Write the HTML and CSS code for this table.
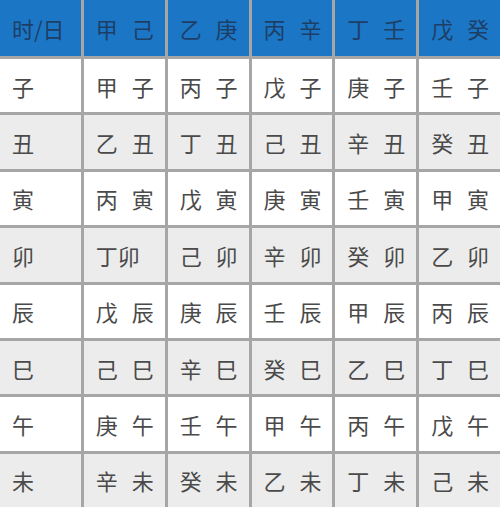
FILE: index.html
```html
<!DOCTYPE html>
<html lang="zh">
<head>
<meta charset="utf-8">
<title>时日干支表</title>
<link rel="stylesheet" href="styles.css">
</head>
<body>
<div class="table">
  <div class="cell head">时/日</div>
  <div class="cell head">甲 己</div>
  <div class="cell head">乙 庚</div>
  <div class="cell head">丙 辛</div>
  <div class="cell head">丁 壬</div>
  <div class="cell head">戊 癸</div>

  <div class="cell">子</div><div class="cell">甲 子</div><div class="cell">丙 子</div><div class="cell">戊 子</div><div class="cell">庚 子</div><div class="cell">壬 子</div>
  <div class="cell alt">丑</div><div class="cell alt">乙 丑</div><div class="cell alt">丁 丑</div><div class="cell alt">己 丑</div><div class="cell alt">辛 丑</div><div class="cell alt">癸 丑</div>
  <div class="cell">寅</div><div class="cell">丙 寅</div><div class="cell">戊 寅</div><div class="cell">庚 寅</div><div class="cell">壬 寅</div><div class="cell">甲 寅</div>
  <div class="cell alt">卯</div><div class="cell alt">丁卯</div><div class="cell alt">己 卯</div><div class="cell alt">辛 卯</div><div class="cell alt">癸 卯</div><div class="cell alt">乙 卯</div>
  <div class="cell">辰</div><div class="cell">戊 辰</div><div class="cell">庚 辰</div><div class="cell">壬 辰</div><div class="cell">甲 辰</div><div class="cell">丙 辰</div>
  <div class="cell alt">巳</div><div class="cell alt">己 巳</div><div class="cell alt">辛 巳</div><div class="cell alt">癸 巳</div><div class="cell alt">乙 巳</div><div class="cell alt">丁 巳</div>
  <div class="cell">午</div><div class="cell">庚 午</div><div class="cell">壬 午</div><div class="cell">甲 午</div><div class="cell">丙 午</div><div class="cell">戊 午</div>
  <div class="cell alt">未</div><div class="cell alt">辛 未</div><div class="cell alt">癸 未</div><div class="cell alt">乙 未</div><div class="cell alt">丁 未</div><div class="cell alt">己 未</div>
</div>
</body>
</html>
```
FILE: styles.css
```css
html, body {
  margin: 0;
  padding: 0;
  background: #ffffff;
}

.table {
  width: 500px;
  height: 507px;
  display: grid;
  grid-template-columns: repeat(6, 1fr);
  grid-template-rows: 56px repeat(8, 1fr);
  gap: 3px;
  background: #a6a6a6;
  font-family: "Noto Sans CJK SC", "Noto Sans CJK JP", sans-serif;
  font-size: 22px;
  font-weight: 400;
  color: #4a4a4a;
}

.cell {
  display: flex;
  align-items: center;
  padding-left: 12px;
  background: #ffffff;
  white-space: pre;
  word-spacing: 9px;
  line-height: 1;
}

.cell.alt {
  background: #ececec;
}

.cell.head {
  background: #1c76c6;
  color: #1d3f66;
}
```
